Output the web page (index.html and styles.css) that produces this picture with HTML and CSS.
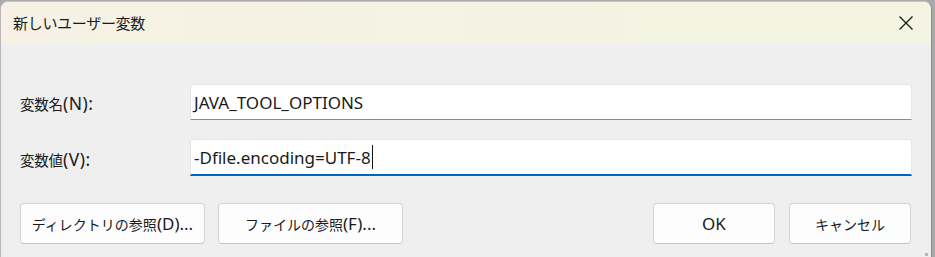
FILE: index.html
```html
<!DOCTYPE html>
<html lang="ja">
<head>
<meta charset="utf-8">
<link rel="stylesheet" href="styles.css">
</head>
<body>
<div class="window">
  <div class="titlebar">
    <span class="title">新しいユーザー変数</span>
    <span class="close" aria-label="閉じる">
      <svg width="16" height="16" viewBox="0 0 16 16"><path d="M1.5 1.5 L14.5 14.5 M14.5 1.5 L1.5 14.5" stroke="#1a1a1a" stroke-width="1.3" fill="none"/></svg>
    </span>
  </div>
  <div class="content">
    <div class="row">
      <label class="label">変数名<span class="lat">(N):</span></label>
      <div class="field"><span class="value">JAVA_TOOL_OPTIONS</span></div>
    </div>
    <div class="row row-second">
      <label class="label">変数値<span class="lat">(V):</span></label>
      <div class="field field-focus"><span class="value">-Dfile.encoding=UTF-8</span><span class="caret"></span></div>
    </div>
    <div class="buttons">
      <div class="btn-group">
        <button class="btn btn-wide">ディレクトリの参照<span class="lat">(D)...</span></button>
        <button class="btn btn-wide">ファイルの参照<span class="lat">(F)...</span></button>
      </div>
      <div class="btn-group btn-group-right">
        <button class="btn btn-small"><span class="lat">OK</span></button>
        <button class="btn btn-small">キャンセル</button>
      </div>
    </div>
  </div>
  <span class="grip"></span>
</div>
</body>
</html>
```
FILE: styles.css
```css
html, body {
  margin: 0;
  padding: 0;
}
body {
  width: 935px;
  height: 257px;
  overflow: hidden;
  background: #a9a9a9;
  font-family: "Noto Sans", "Noto Sans CJK JP", sans-serif;
  color: #1b1b1b;
}
.window {
  position: relative;
  margin-top: 1px;
  width: 930px;
  height: 256px;
  background: #efefef;
  border-left: 1px solid #b8b8b8;
  border-top: 1px solid #c4c4c4;
  border-right: 1px solid #8c8c8c;
  border-radius: 8px 8px 0 0;
  overflow: hidden;
}
.titlebar {
  height: 42px;
  display: flex;
  align-items: center;
  justify-content: space-between;
  padding: 0 14px 0 12px;
  background: linear-gradient(to right, #f6f1e4, #f4f3e3 60%, #f3f5e2);
}
.title {
  font-family: "Noto Sans CJK JP", sans-serif;
  font-size: 15px;
  letter-spacing: -0.3px;
  padding-bottom: 1px;
}
.close {
  display: flex;
  width: 16px;
  height: 16px;
  margin-right: 3px;
}
.content {
  padding: 40px 19px 0 19px;
}
.row {
  display: flex;
  align-items: center;
  height: 36px;
}
.row-second {
  margin-top: 19px;
  height: 37px;
}
.label {
  width: 170px;
  font-size: 14.5px;
  font-family: "Noto Sans CJK JP", sans-serif;
  letter-spacing: -0.2px;
  padding-top: 2px;
}
.lat {
  font-family: "Noto Sans", sans-serif;
  font-size: 17px;
  letter-spacing: 0;
}
.label .lat {
  font-size: 17.5px;
  letter-spacing: 0.5px;
}
.field {
  box-sizing: border-box;
  flex: 1;
  height: 100%;
  display: flex;
  align-items: center;
  background: #ffffff;
  border: 1px solid #e6e6e6;
  border-bottom: 1px solid #8b8b8b;
  border-radius: 3px 3px 0 0;
  padding-left: 3px;
}
.field-focus {
  border-bottom: 2px solid #0067c0;
}
.value {
  font-size: 17px;
  color: #1a1a1a;
}
.caret {
  display: inline-block;
  width: 1px;
  height: 24px;
  background: #111;
  margin-left: 1px;
}
.buttons {
  display: flex;
  justify-content: space-between;
  margin-top: 27px;
}
.btn-group {
  display: flex;
  gap: 13px;
}
.btn-group-right {
  gap: 14px;
  margin-right: 1px;
}
.btn {
  box-sizing: border-box;
  height: 41px;
  background: #fdfdfd;
  border: 1px solid #d3d3d3;
  border-bottom-color: #c4c4c4;
  border-radius: 4px;
  font-family: "Noto Sans CJK JP", sans-serif;
  font-size: 14px;
  color: #1b1b1b;
  padding: 0;
  display: flex;
  align-items: center;
  justify-content: center;
}
.btn-wide {
  width: 185px;
}
.btn-small {
  width: 122px;
}
.grip {
  position: absolute;
  right: 3px;
  bottom: 2px;
  width: 3px;
  height: 3px;
  background: #b5b5b5;
}
```
